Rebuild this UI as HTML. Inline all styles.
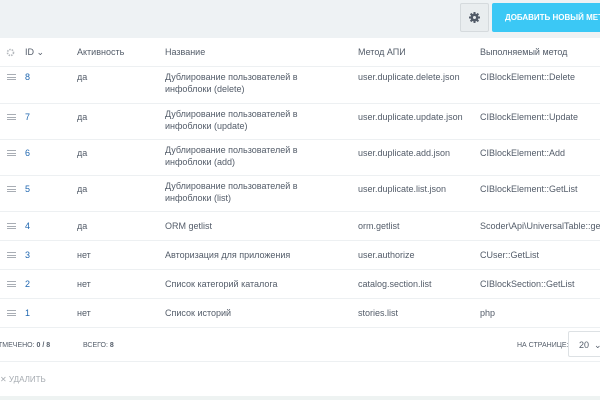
<!DOCTYPE html>
<html><head><meta charset="utf-8"><style>
*{margin:0;padding:0;box-sizing:border-box}
body{width:600px;height:400px;overflow:hidden;background:#fff;font-family:"Liberation Sans",Arial,sans-serif;font-size:9px;color:#535c69;position:relative}
.a{position:absolute;white-space:nowrap}
.top{position:absolute;left:0;top:0;width:600px;height:38px;background:#eef2f4}
.gb{position:absolute;left:460px;top:3px;width:29px;height:29px;border:1px solid #d5dadd;background:#e9edef;border-radius:2px}
.bb{position:absolute;left:492px;top:3px;width:130px;height:29px;background:#3bc8f5;border-radius:2px;color:#fff;font-weight:bold;font-size:8px;line-height:29px;padding-left:13px;white-space:nowrap;overflow:hidden}
.line{position:absolute;left:0;width:600px;height:1px;background:#edf0f2}
.id{color:#2067b0}
.hb{position:absolute;left:7px;width:9px;height:6px;border-top:1px solid #a8adb4;border-bottom:1px solid #a8adb4}
.hb:after{content:"";position:absolute;left:0;top:2px;width:9px;height:1px;background:#a8adb4}
.bot{position:absolute;left:0;top:396px;width:600px;height:4px;background:#eef3f2}
</style></head><body>
<div class="top"></div>
<div class="gb"><svg width="27" height="27" viewBox="0 0 27 27"><g fill="#535c69"><circle cx="13.5" cy="13.5" r="4"/><rect x="12.5" y="8" width="2" height="11"/><rect x="8" y="12.5" width="11" height="2"/><rect x="12.5" y="8" width="2" height="11" transform="rotate(45 13.5 13.5)"/><rect x="12.5" y="8" width="2" height="11" transform="rotate(-45 13.5 13.5)"/></g><circle cx="13.5" cy="13.5" r="1.5" fill="#e9edef"/></svg></div>
<div class="bb">ДОБАВИТЬ НОВЫЙ МЕТОД</div>

<svg class="a" style="left:6px;top:48px" width="9" height="9" viewBox="0 0 9 9"><circle cx="4.5" cy="4.5" r="3" fill="none" stroke="#b5b9be" stroke-width="1.6" stroke-dasharray="1.5 1"/></svg>
<div class="a" style="left:25px;top:47px">ID ⌄</div>
<div class="a" style="left:77px;top:47px">Активность</div>
<div class="a" style="left:165px;top:47px">Название</div>
<div class="a" style="left:358px;top:47px">Метод АПИ</div>
<div class="a" style="left:480px;top:47px">Выполняемый метод</div>
<div class="line" style="top:66px"></div>

<div class="hb" style="top:74px"></div><div class="a id" style="left:25px;top:72px">8</div><div class="a" style="left:77px;top:72px">да</div><div class="a" style="left:165px;top:71px;line-height:12px">Дублирование пользователей в<br>инфоблоки (delete)</div><div class="a" style="left:358px;top:72px">user.duplicate.delete.json</div><div class="a" style="left:480px;top:72px">CIBlockElement::Delete</div>
<div class="line" style="top:103px"></div>
<div class="hb" style="top:114px"></div><div class="a id" style="left:25px;top:112px">7</div><div class="a" style="left:77px;top:112px">да</div><div class="a" style="left:165px;top:108px;line-height:12px">Дублирование пользователей в<br>инфоблоки (update)</div><div class="a" style="left:358px;top:112px">user.duplicate.update.json</div><div class="a" style="left:480px;top:112px">CIBlockElement::Update</div>
<div class="line" style="top:139px"></div>
<div class="hb" style="top:150px"></div><div class="a id" style="left:25px;top:148px">6</div><div class="a" style="left:77px;top:148px">да</div><div class="a" style="left:165px;top:144px;line-height:12px">Дублирование пользователей в<br>инфоблоки (add)</div><div class="a" style="left:358px;top:148px">user.duplicate.add.json</div><div class="a" style="left:480px;top:148px">CIBlockElement::Add</div>
<div class="line" style="top:175px"></div>
<div class="hb" style="top:186px"></div><div class="a id" style="left:25px;top:184px">5</div><div class="a" style="left:77px;top:184px">да</div><div class="a" style="left:165px;top:180px;line-height:12px">Дублирование пользователей в<br>инфоблоки (list)</div><div class="a" style="left:358px;top:184px">user.duplicate.list.json</div><div class="a" style="left:480px;top:184px">CIBlockElement::GetList</div>
<div class="line" style="top:211px"></div>
<div class="hb" style="top:223px"></div><div class="a id" style="left:25px;top:221px">4</div><div class="a" style="left:77px;top:221px">да</div><div class="a" style="left:165px;top:221px">ORM getlist</div><div class="a" style="left:358px;top:221px">orm.getlist</div><div class="a" style="left:480px;top:221px">Scoder\Api\UniversalTable::getList</div>
<div class="line" style="top:240px"></div>
<div class="hb" style="top:252px"></div><div class="a id" style="left:25px;top:250px">3</div><div class="a" style="left:77px;top:250px">нет</div><div class="a" style="left:165px;top:250px">Авторизация для приложения</div><div class="a" style="left:358px;top:250px">user.authorize</div><div class="a" style="left:480px;top:250px">CUser::GetList</div>
<div class="line" style="top:269px"></div>
<div class="hb" style="top:281px"></div><div class="a id" style="left:25px;top:279px">2</div><div class="a" style="left:77px;top:279px">нет</div><div class="a" style="left:165px;top:279px">Список категорий каталога</div><div class="a" style="left:358px;top:279px">catalog.section.list</div><div class="a" style="left:480px;top:279px">CIBlockSection::GetList</div>
<div class="line" style="top:298px"></div>
<div class="hb" style="top:310px"></div><div class="a id" style="left:25px;top:308px">1</div><div class="a" style="left:77px;top:308px">нет</div><div class="a" style="left:165px;top:308px">Список историй</div><div class="a" style="left:358px;top:308px">stories.list</div><div class="a" style="left:480px;top:308px">php</div>
<div class="line" style="top:327px"></div>

<div class="a" style="left:-2px;top:342px;font-size:7px">ТМЕЧЕНО: <b>0 / 8</b></div>
<div class="a" style="left:83px;top:342px;font-size:7px">ВСЕГО: <b>8</b></div>
<div class="a" style="left:517px;top:342px;font-size:7px">НА СТРАНИЦЕ:</div>
<div class="a" style="left:568px;top:331px;width:40px;height:26px;border:1px solid #dde1e4;border-radius:2px;padding:8px 0 0 10px">20 &nbsp;⌄</div>
<div class="line" style="top:361px"></div>
<div class="a" style="left:0px;top:375px;font-size:8px;color:#a6abb1">✕ УДАЛИТЬ</div>
<div class="bot"></div>
</body></html>
